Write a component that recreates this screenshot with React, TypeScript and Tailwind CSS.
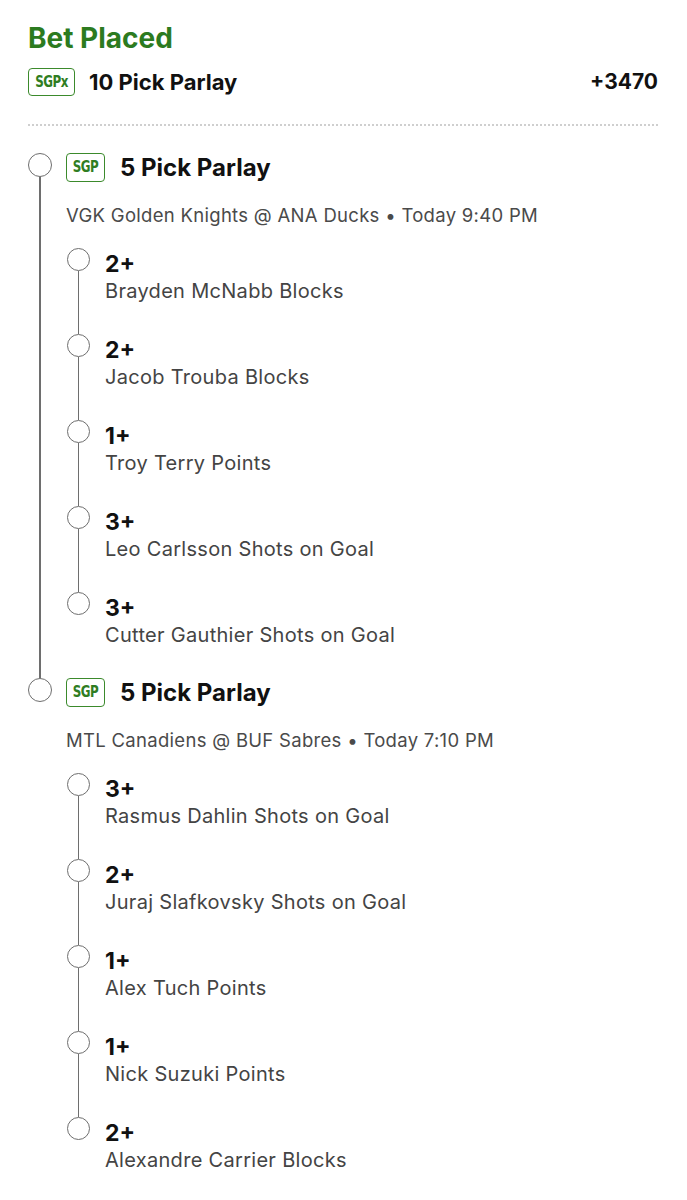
import React from 'react';

type Leg = { line: string; name: string };
type Section = { event: string; legs: Leg[] };

const sections: Section[] = [
  {
    event: 'VGK Golden Knights @ ANA Ducks • Today 9:40 PM',
    legs: [
      { line: '2+', name: 'Brayden McNabb Blocks' },
      { line: '2+', name: 'Jacob Trouba Blocks' },
      { line: '1+', name: 'Troy Terry Points' },
      { line: '3+', name: 'Leo Carlsson Shots on Goal' },
      { line: '3+', name: 'Cutter Gauthier Shots on Goal' },
    ],
  },
  {
    event: 'MTL Canadiens @ BUF Sabres • Today 7:10 PM',
    legs: [
      { line: '3+', name: 'Rasmus Dahlin Shots on Goal' },
      { line: '2+', name: 'Juraj Slafkovsky Shots on Goal' },
      { line: '1+', name: 'Alex Tuch Points' },
      { line: '1+', name: 'Nick Suzuki Points' },
      { line: '2+', name: 'Alexandre Carrier Blocks' },
    ],
  },
];

const Badge: React.FC<{ label: string; wide?: boolean }> = ({ label, wide }) => (
  <div
    className={`flex shrink-0 items-center justify-center rounded-[4px] border-[1.5px] border-[#3b8a2c] text-[#2f7d22] ${
      wide ? 'h-[28px] w-[47px]' : 'h-[29px] w-[39px]'
    }`}
  >
    <span className="font-['DejaVu_Sans_Condensed','DejaVu_Sans',sans-serif] text-[15px] font-semibold leading-none tracking-[-0.6px] scale-x-[0.88]">
      {label}
    </span>
  </div>
);

export default function App() {
  return (
    <div className="min-h-[1200px] w-[687px] bg-white pl-[28px] pr-[29px] font-['Inter','Liberation_Sans',sans-serif] text-[#111]">
      <h1 className="pt-[21px] text-[28px] font-bold leading-[34px] text-[#2c7b1f]">Bet Placed</h1>

      <div className="mt-[13px] flex h-[28px] items-center">
        <Badge label="SGPx" wide />
        <span className="ml-[14px] text-[22px] font-bold">10 Pick Parlay</span>
        <span className="ml-auto text-[21px] font-bold">+3470</span>
      </div>

      <div className="mt-[28px] h-[2px] bg-[repeating-linear-gradient(90deg,#cfcfcf_0_2px,transparent_2px_4px)]" />

      <div className="mt-[27px] flex flex-col">
        {sections.map((s, si) => {
          const lastSection = si === sections.length - 1;
          return (
            <div key={si} className="flex">
              {/* rail */}
              <div className="flex w-[24px] shrink-0 flex-col items-center">
                <div className="size-[24px] rounded-full border-[1.5px] border-[#6e6e6e]" />
                {!lastSection && <div className="w-[1.5px] flex-1 bg-[#6e6e6e]" />}
              </div>

              <div className="flex-1 pl-[14px]">
                <div className="flex h-[29px] items-center">
                  <Badge label="SGP" />
                  <span className="ml-[15px] text-[24px] font-bold">5 Pick Parlay</span>
                </div>
                <div className="mt-[21px] text-[18.5px] leading-[24px] tracking-[0.3px] text-[#4a4a4a]">{s.event}</div>

                <div className="mt-[21px] flex flex-col">
                  {s.legs.map((l, li) => {
                    const lastLeg = li === s.legs.length - 1;
                    return (
                      <div key={li} className="flex h-[86px]">
                        <div className="ml-[1px] flex w-[23px] shrink-0 flex-col items-center">
                          <div className="size-[23px] rounded-full border-[1.5px] border-[#6e6e6e]" />
                          {!lastLeg && <div className="w-[1.5px] flex-1 bg-[#6e6e6e]" />}
                        </div>
                        <div className="pl-[15px] pt-[2px]">
                          <div className="text-[23px] font-bold leading-[28px]">{l.line}</div>
                          <div className="text-[20px] leading-[26px] tracking-[0.3px] text-[#444]">{l.name}</div>
                        </div>
                      </div>
                    );
                  })}
                </div>
              </div>
            </div>
          );
        })}
      </div>
    </div>
  );
}
